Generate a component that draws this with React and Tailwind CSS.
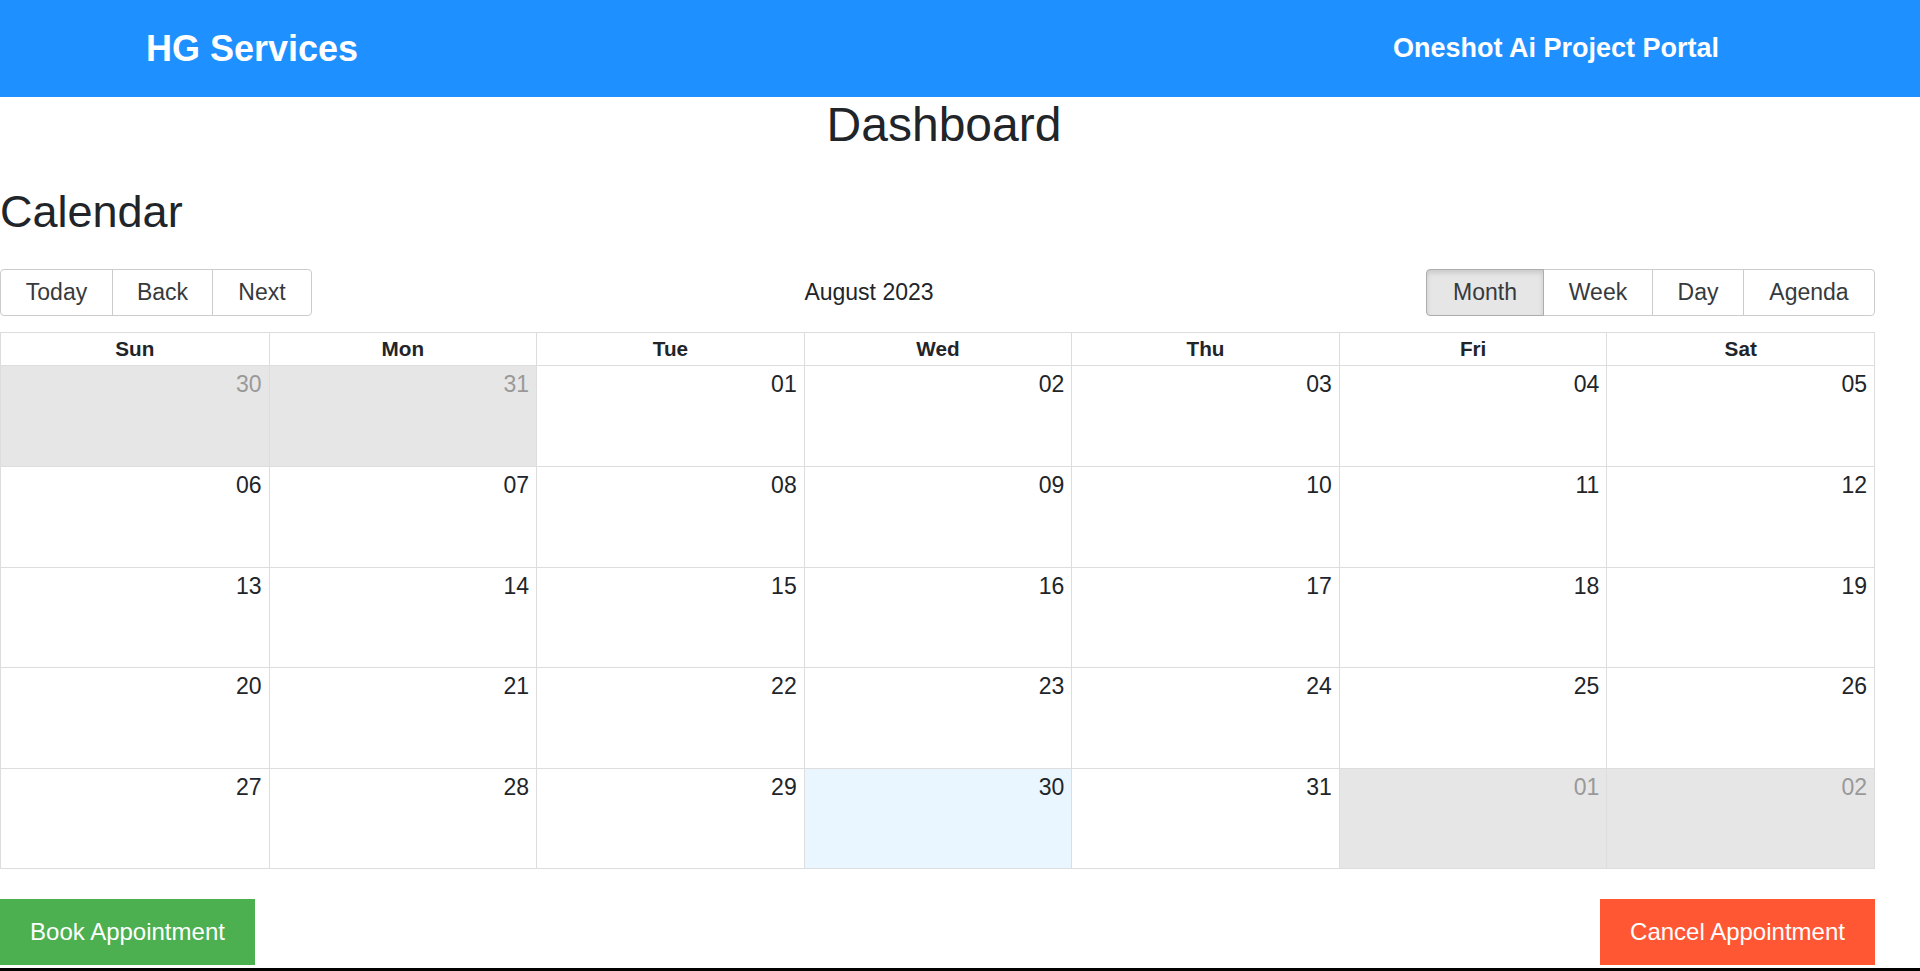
import React from "react";

export default function App() {
  const days = ["Sun", "Mon", "Tue", "Wed", "Thu", "Fri", "Sat"];

  // August 2023 month grid, with spill-over days from July / September
  const weeks = [
    [
      { d: "30", off: true },
      { d: "31", off: true },
      { d: "01" },
      { d: "02" },
      { d: "03" },
      { d: "04" },
      { d: "05" },
    ],
    [{ d: "06" }, { d: "07" }, { d: "08" }, { d: "09" }, { d: "10" }, { d: "11" }, { d: "12" }],
    [{ d: "13" }, { d: "14" }, { d: "15" }, { d: "16" }, { d: "17" }, { d: "18" }, { d: "19" }],
    [{ d: "20" }, { d: "21" }, { d: "22" }, { d: "23" }, { d: "24" }, { d: "25" }, { d: "26" }],
    [
      { d: "27" },
      { d: "28" },
      { d: "29" },
      { d: "30", today: true },
      { d: "31" },
      { d: "01", off: true },
      { d: "02", off: true },
    ],
  ];

  const leftButtons = [
    { label: "Today", w: "w-[113px]" },
    { label: "Back", w: "w-[101px]" },
    { label: "Next", w: "w-[100px]" },
  ];

  const viewButtons = [
    { label: "Month", w: "w-[118px]", active: true },
    { label: "Week", w: "w-[110px]" },
    { label: "Day", w: "w-[92px]" },
    { label: "Agenda", w: "w-[132px]" },
  ];

  return (
    <div className="w-[1920px] h-[971px] overflow-hidden bg-white font-['Liberation_Sans',Arial,sans-serif] text-[#212529]">
      {/* Header */}
      <header className="h-[97px] bg-[#1e90ff] flex items-center justify-between pl-[146px] pr-[201px] text-white font-bold">
        <h1 className="text-[36px] leading-none">HG Services</h1>
        <h2 className="text-[27px] leading-none">Oneshot Ai Project Portal</h2>
      </header>

      {/* Title */}
      <h1 className="w-[1888px] pt-[3px] text-center text-[48px] leading-[50px]">Dashboard</h1>

      {/* Calendar */}
      <section className="w-[1875px]">
        <h2 className="mt-[35px] text-[45px] leading-[53px]">Calendar</h2>

        {/* Toolbar */}
        <div className="mt-[31px] flex items-center h-[47px] text-[23px] text-[#373a3c]">
          <div className="flex h-full">
            {leftButtons.map((b, i) => (
              <button
                key={b.label}
                className={`${b.w} h-full border border-[#ccc] bg-white ${i > 0 ? "-ml-px" : ""} ${
                  i === 0 ? "rounded-l-[4px]" : ""
                } ${i === leftButtons.length - 1 ? "rounded-r-[4px]" : ""}`}
              >
                {b.label}
              </button>
            ))}
          </div>
          <div className="flex-1 text-center text-[#212529]">August 2023</div>
          <div className="flex h-full">
            {viewButtons.map((b, i) => (
              <button
                key={b.label}
                className={`${b.w} h-full border ${
                  b.active
                    ? "bg-[#e6e6e6] border-[#adadad] shadow-[inset_0_3px_5px_rgba(0,0,0,0.125)] relative z-10"
                    : "bg-white border-[#ccc]"
                } ${i > 0 ? "-ml-px" : ""} ${i === 0 ? "rounded-l-[4px]" : ""} ${
                  i === viewButtons.length - 1 ? "rounded-r-[4px]" : ""
                }`}
              >
                {b.label}
              </button>
            ))}
          </div>
        </div>

        {/* Month view */}
        <div className="mt-[16px] border border-[#ddd]">
          <div className="grid grid-cols-7 h-[33px] border-b border-[#ddd]">
            {days.map((d, i) => (
              <div
                key={d}
                className={`flex items-center justify-center font-bold text-[20.7px] ${
                  i > 0 ? "border-l border-[#ddd]" : ""
                }`}
              >
                {d}
              </div>
            ))}
          </div>
          {weeks.map((week, r) => (
            <div
              key={r}
              className={`grid grid-cols-7 h-[100.4px] ${r > 0 ? "border-t border-[#ddd]" : ""}`}
            >
              {week.map((c, i) => (
                <div
                  key={i}
                  className={`text-right pr-[7px] pt-[5px] text-[23px] leading-[26px] ${
                    i > 0 ? "border-l border-[#ddd]" : ""
                  } ${c.off ? "bg-[#e6e6e6] text-[#999]" : ""} ${c.today ? "bg-[#eaf6ff]" : ""}`}
                >
                  {c.d}
                </div>
              ))}
            </div>
          ))}
        </div>

        {/* Actions */}
        <div className="mt-[30px] flex justify-between">
          <button className="w-[255px] h-[66px] bg-[#4caf50] text-white text-[24px]">
            Book Appointment
          </button>
          <button className="w-[275px] h-[66px] bg-[#ff5733] text-white text-[24px]">
            Cancel Appointment
          </button>
        </div>
      </section>

      <div className="mt-[3px] h-[3px] bg-black" />
    </div>
  );
}
